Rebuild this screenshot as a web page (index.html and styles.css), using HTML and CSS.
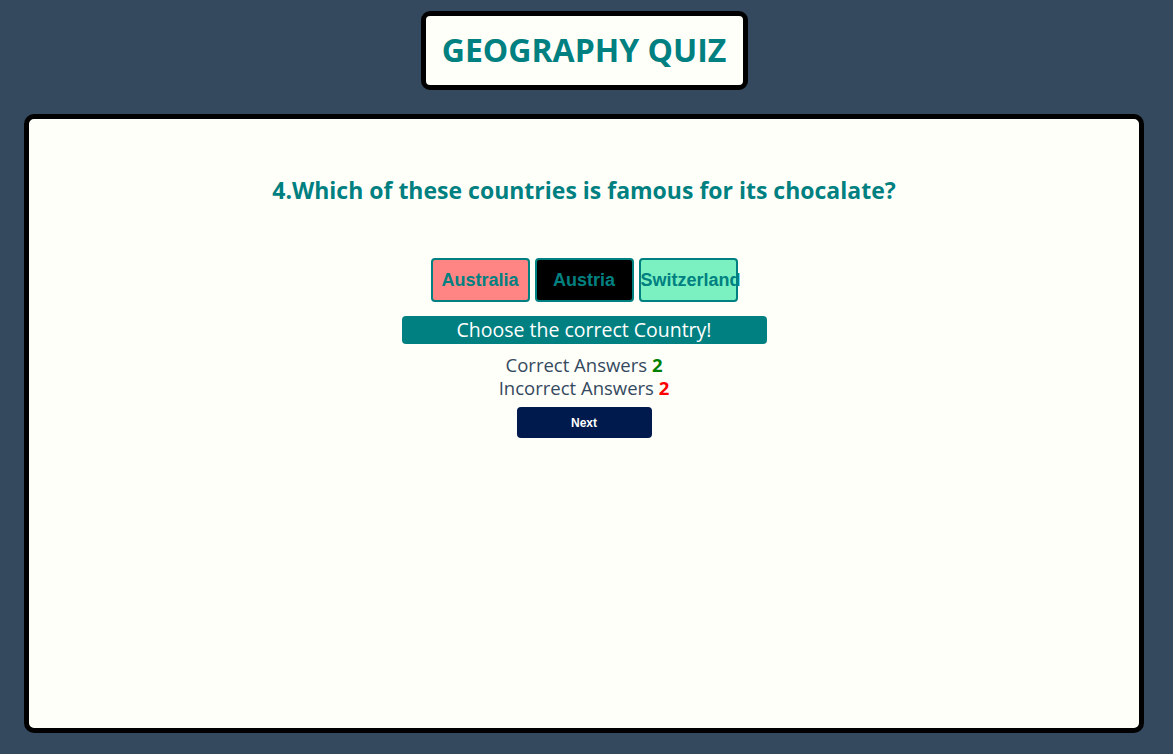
FILE: index.html
```html
<!DOCTYPE html>
<html>
<head>
<meta charset="utf-8">
<link rel="stylesheet" href="styles.css">
</head>
<body>
<header class="top">
  <h1 class="title">GEOGRAPHY QUIZ</h1>
</header>
<main class="card">
  <h2 class="question">4.Which of these countries is famous for its chocalate?</h2>
  <div class="options">
    <button class="opt opt-wrong">Australia</button>
    <button class="opt opt-dark">Austria</button>
    <button class="opt opt-right">Switzerland</button>
  </div>
  <div class="banner">Choose the correct Country!</div>
  <div class="score">
    <div>Correct Answers <span class="num good">2</span></div>
    <div>Incorrect Answers <span class="num bad">2</span></div>
  </div>
  <button class="next">Next</button>
</main>
</body>
</html>
```
FILE: styles.css
```css
html, body {
  margin: 0;
  padding: 0;
}
body {
  background: #34495e;
  font-family: "Open Sans", "Noto Sans", sans-serif;
  height: 754px;
  padding: 11px 29px 0 24px;
  box-sizing: border-box;
  display: flex;
  flex-direction: column;
  align-items: center;
}
.top {
  display: flex;
  justify-content: center;
}
.title {
  margin: 0;
  width: 327px;
  height: 79px;
  box-sizing: border-box;
  border: 5px solid #000;
  border-radius: 9px;
  background: #fffffa;
  color: #008080;
  font-size: 32px;
  font-weight: 700;
  display: flex;
  align-items: center;
  justify-content: center;
  padding-bottom: 2px;
}
.card {
  margin-top: 24px;
  width: 1120px;
  height: 619px;
  box-sizing: border-box;
  border: 5px solid #000;
  border-radius: 10px;
  background: #fffffa;
  display: flex;
  flex-direction: column;
  align-items: center;
}
.question {
  margin: 55px 0 0;
  color: #008080;
  font-size: 23px;
  font-weight: 700;
  line-height: 32px;
}
.options {
  margin-top: 52px;
  display: flex;
  gap: 5px;
}
.opt {
  width: 99px;
  height: 44px;
  box-sizing: border-box;
  border: 2px solid #008080;
  border-radius: 4px;
  font-family: "Liberation Sans", Arial, sans-serif;
  font-weight: 700;
  font-size: 18px;
  color: #008080;
  padding: 0;
  white-space: nowrap;
  overflow: visible;
}
.opt-wrong { background: #ff8585; }
.opt-dark { background: #000; }
.opt-right { background: #7bf1c2; }
.banner {
  margin-top: 14px;
  width: 365px;
  height: 28px;
  background: #008080;
  border-radius: 4px;
  color: #fff;
  font-size: 19.5px;
  line-height: 28px;
  text-align: center;
}
.score {
  margin-top: 9px;
  color: #34495e;
  font-size: 18.5px;
  line-height: 23px;
  text-align: center;
}
.num { font-weight: 700; }
.good { color: #008000; }
.bad { color: #ff0000; }
.next {
  margin-top: 8px;
  width: 135px;
  height: 31px;
  border: none;
  border-radius: 4px;
  background: #001a4d;
  color: #fff;
  font-family: "Liberation Sans", Arial, sans-serif;
  font-weight: 700;
  font-size: 12px;
}
```
